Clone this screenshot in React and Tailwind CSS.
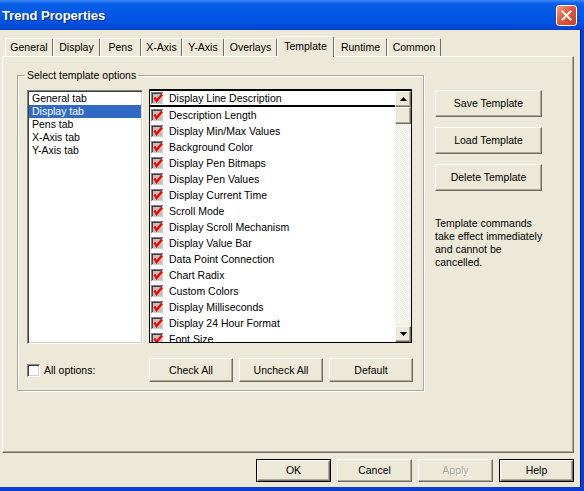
import React from 'react';

const TABS = [
  { label: 'General', w: 'w-[48px]' },
  { label: 'Display', w: 'w-[47px]' },
  { label: 'Pens', w: 'w-[41px]' },
  { label: 'X-Axis', w: 'w-[41px]' },
  { label: 'Y-Axis', w: 'w-[42px]' },
  { label: 'Overlays', w: 'w-[53px]' },
  { label: 'Template', w: 'w-[57px]', active: true },
  { label: 'Runtime', w: 'w-[53px]' },
  { label: 'Common', w: 'w-[54px]' },
];

const SECTIONS = ['General tab', 'Display tab', 'Pens tab', 'X-Axis tab', 'Y-Axis tab'];

const OPTIONS = [
  'Display Line Description',
  'Description Length',
  'Display Min/Max Values',
  'Background Color',
  'Display Pen Bitmaps',
  'Display Pen Values',
  'Display Current Time',
  'Scroll Mode',
  'Display Scroll Mechanism',
  'Display Value Bar',
  'Data Point Connection',
  'Chart Radix',
  'Custom Colors',
  'Display Milliseconds',
  'Display 24 Hour Format',
  'Font Size',
];

const raised =
  'bg-[#ece9d8] border border-t-white border-l-white border-r-[#716f64] border-b-[#716f64] shadow-[inset_-1px_-1px_0_#aca899]';

function RedCheck() {
  return (
    <svg width="13" height="13" viewBox="0 0 13 13" className="shrink-0">
      <rect x="0" y="0" width="13" height="13" fill="#ffffff" />
      <rect x="0" y="0" width="12" height="12" fill="#808080" />
      <rect x="1" y="1" width="11" height="11" fill="#d4d0c8" />
      <rect x="1" y="1" width="10" height="10" fill="#404040" />
      <rect x="2" y="2" width="9" height="9" fill="#c0c0c0" />
      <path d="M3.5 5.5 L5.5 9 L11 2.5" fill="none" stroke="#ff0000" strokeWidth="2.4" />
    </svg>
  );
}

function Arrow({ down }) {
  return (
    <svg width="7" height="4" viewBox="0 0 7 4">
      <polygon points={down ? '0,0 7,0 3.5,4' : '0,4 7,4 3.5,0'} fill="#000" />
    </svg>
  );
}

function Btn({ children, className = '' }) {
  return (
    <div className={`${raised} flex items-center justify-center ${className}`}>{children}</div>
  );
}

export default function App() {
  return (
    <div className="w-[584px] h-[491px] overflow-hidden bg-[#ece9d8] font-['Liberation_Sans',Arial,sans-serif] text-[10.5px] leading-[13px] text-black flex flex-col">
      {/* title bar */}
      <div className="h-[30px] shrink-0 flex items-center pl-[2px] pr-[7px] bg-[linear-gradient(to_bottom,#3d8af7_0%,#0a5ee8_12%,#0058e6_45%,#0052e0_75%,#0043cc_100%)]">
        <span className="text-white font-bold text-[13px] [text-shadow:1px_1px_0_#0a2a8c]">Trend Properties</span>
        <div className="ml-auto w-[21px] h-[21px] rounded-[3px] border border-white bg-[linear-gradient(135deg,#f4a083_0%,#e4583a_45%,#c8401e_100%)] flex items-center justify-center">
          <svg width="11" height="11" viewBox="0 0 11 11">
            <path d="M1.5 1.5 L9.5 9.5 M9.5 1.5 L1.5 9.5" stroke="#fff" strokeWidth="2" strokeLinecap="square" />
          </svg>
        </div>
      </div>

      <div className="flex h-[457px]">
        <div className="w-[580px] flex flex-col">
          {/* tabs */}
          <div className="h-[26px] flex items-end pl-[5px]">
            {TABS.map(t =>
              t.active ? (
                <div
                  key={t.label}
                  className={`${t.w} h-[21px] -mb-[1px] relative z-10 bg-[#ece9d8] border-t border-l border-r border-t-white border-l-white border-r-[#716f64] rounded-t-[2px] flex items-center justify-center pb-[2px]`}
                >
                  {t.label}
                </div>
              ) : (
                <div
                  key={t.label}
                  className={`${t.w} h-[18px] border-t border-l border-r border-t-white border-l-white border-r-[#716f64] rounded-t-[2px] flex items-center justify-center`}
                >
                  {t.label}
                </div>
              )
            )}
          </div>

          {/* tab panel */}
          <div className="ml-[2px] w-[572px] h-[397px] border border-t-white border-l-white border-r-[#716f64] border-b-[#716f64] shadow-[inset_-1px_-1px_0_#aca899] flex items-start pl-[14px]">
            {/* group box */}
            <div className="mt-[18px] w-[407px] h-[316px] border border-[#aca899] shadow-[inset_1px_1px_0_white,1px_1px_0_white] flex flex-col pl-[9px]">
              <span className="self-start -mt-[7px] -ml-[2px] px-[2px] bg-[#ece9d8]">Select template options</span>

              <div className="mt-[8px] flex items-start gap-[6px]">
                <div className="w-[116px] h-[254px] bg-white border border-t-[#808080] border-l-[#808080] border-r-white border-b-white shadow-[inset_1px_1px_0_#404040,inset_-1px_-1px_0_#d4d0c8] pt-[1px]">
                  {SECTIONS.map((s, i) => (
                    <div
                      key={s}
                      className={`h-[13px] pl-[3px] mx-[1px] ${i === 1 ? 'bg-[#316ac5] text-white' : ''}`}
                    >
                      {s}
                    </div>
                  ))}
                </div>

                <div className="-mt-[1px] w-[263px] h-[254px] bg-white border border-black border-t-2 flex">
                  <div className="flex-1 overflow-hidden">
                    {OPTIONS.map((o, i) => (
                      <div
                        key={o}
                        className={`h-[16px] flex items-center gap-[5px] pl-[1px] whitespace-nowrap ${i === 0 ? 'border-b-2 border-black' : ''}`}
                      >
                        <RedCheck />
                        <span>{o}</span>
                      </div>
                    ))}
                  </div>
                  <div className="w-[16px] flex flex-col">
                    <Btn className="h-[16px]"><Arrow /></Btn>
                    <Btn className="h-[17px]" />
                    <div className="flex-1 bg-[conic-gradient(#ece9d8_25%,white_0_50%,#ece9d8_0_75%,white_0)] [background-size:2px_2px]" />
                    <Btn className="h-[16px]"><Arrow down /></Btn>
                  </div>
                </div>
              </div>

              <div className="mt-[14px] flex items-center h-[24px]">
                <div className="w-[122px] flex items-center gap-[4px]">
                  <div className="w-[13px] h-[13px] bg-white border border-t-[#808080] border-l-[#808080] border-r-white border-b-white shadow-[inset_1px_1px_0_#404040,inset_-1px_-1px_0_#d4d0c8]" />
                  <span>All options:</span>
                </div>
                <div className="flex gap-[6px]">
                  <Btn className="w-[84px] h-[24px]">Check All</Btn>
                  <Btn className="w-[84px] h-[24px]">Uncheck All</Btn>
                  <Btn className="w-[84px] h-[24px]">Default</Btn>
                </div>
              </div>
            </div>

            {/* right column */}
            <div className="ml-[11px] mt-[33px] w-[107px] flex flex-col">
              <div className="flex flex-col gap-[10px]">
                <Btn className="h-[27px]">Save Template</Btn>
                <Btn className="h-[27px]">Load Template</Btn>
                <Btn className="h-[27px]">Delete Template</Btn>
              </div>
              <p className="mt-[26px] whitespace-nowrap">
                Template commands<br />
                take effect immediately<br />
                and cannot be<br />
                cancelled.
              </p>
            </div>
          </div>

          {/* dialog buttons */}
          <div className="mt-[6px] pr-[6px] flex justify-end gap-[6px]">
            <div className="w-[75px] h-[23px] bg-[#ece9d8] border border-black shadow-[inset_1px_1px_0_white,inset_-1px_-1px_0_#716f64,inset_-2px_-2px_0_#aca899] flex items-center justify-center">OK</div>
            <Btn className="w-[75px] h-[23px]">Cancel</Btn>
            <Btn className="w-[75px] h-[23px] text-[#aca899] [text-shadow:1px_1px_0_white]">Apply</Btn>
            <div className="w-[75px] h-[23px] bg-[#ece9d8] border border-black shadow-[inset_1px_1px_0_white,inset_-1px_-1px_0_#716f64,inset_-2px_-2px_0_#aca899] flex items-center justify-center">Help</div>
          </div>
        </div>
        <div className="w-[4px] bg-[#0a3ed6] border-l border-[#00138c]" />
      </div>

      <div className="h-[4px] bg-[#0a3ed6]" />
    </div>
  );
}
